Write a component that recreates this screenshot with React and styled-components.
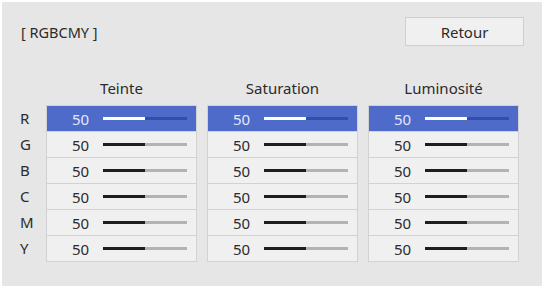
import React from 'react';
import styled, { createGlobalStyle } from 'styled-components';

const GlobalStyle = createGlobalStyle`
  html, body {
    margin: 0;
    padding: 0;
    background: #ffffff;
  }
  body {
    font-family: "Noto Sans", "Open Sans", "Liberation Sans", sans-serif;
    color: #2b2b2b;
  }
`;

const Panel = styled.div`
  margin: 2px;
  width: 540px;
  height: 284px;
  background: #e6e6e6;
  box-sizing: border-box;
  display: flex;
  flex-direction: column;
`;

const TopBar = styled.div`
  display: flex;
  justify-content: space-between;
  align-items: center;
  margin-top: 15px;
  padding: 0 18px 0 19px;
`;

const Title = styled.div`
  font-size: 14.5px;
`;

const BackButton = styled.button`
  width: 119px;
  height: 29px;
  background: #f0f0f0;
  border: 1px solid #cfcfcf;
  font-family: inherit;
  font-size: 15px;
  color: #2b2b2b;
  padding: 0;
`;

const Grid = styled.div`
  display: flex;
  gap: 10px;
  margin-top: 32px;
`;

const Column = styled.div`
  display: flex;
  flex-direction: column;
  width: ${(p) => p.$width}px;
`;

const Heading = styled.div`
  height: 20px;
  line-height: 20px;
  text-align: center;
  font-size: 15px;
  margin-bottom: 7px;
`;

const LabelList = styled.div`
  display: flex;
  flex-direction: column;
  padding-top: 1px;
`;

const Label = styled.div`
  height: 26px;
  line-height: 25px;
  padding-left: 18px;
  font-size: 15px;
`;

const Box = styled.div`
  border: 1px solid #d2d2d2;
  background: #d2d2d2;
  display: flex;
  flex-direction: column;
  gap: 1px;
`;

const Row = styled.div`
  height: 25px;
  display: flex;
  align-items: center;
  padding-left: 25px;
  background: ${(p) => (p.$active ? '#4f6bc9' : '#f0f0f0')};
`;

const Value = styled.span`
  width: 31px;
  font-size: 15px;
  color: ${(p) => (p.$active ? '#e2e8fa' : '#2b2b2b')};
`;

const Track = styled.div`
  width: 84px;
  height: 3px;
  background: ${(p) => (p.$active ? '#2f4ead' : '#b3b3b3')};
`;

const Fill = styled.div`
  height: 100%;
  background: ${(p) => (p.$active ? '#ffffff' : '#1e1e1e')};
`;

const channels = ['R', 'G', 'B', 'C', 'M', 'Y'];
const columns = ['Teinte', 'Saturation', 'Luminosité'];

function Slider({ value, active }) {
  return (
    <Track $active={active}>
      <Fill $active={active} style={{ width: `${value}%` }} />
    </Track>
  );
}

export default function App() {
  return (
    <>
      <GlobalStyle />
      <Panel>
        <TopBar>
          <Title>[ RGBCMY ]</Title>
          <BackButton>Retour</BackButton>
        </TopBar>
        <Grid>
          <Column $width={34}>
            <Heading />
            <LabelList>
              {channels.map((c) => (
                <Label key={c}>{c}</Label>
              ))}
            </LabelList>
          </Column>
          {columns.map((name) => (
            <Column key={name} $width={151}>
              <Heading>{name}</Heading>
              <Box>
                {channels.map((c, i) => (
                  <Row key={c} $active={i === 0}>
                    <Value $active={i === 0}>50</Value>
                    <Slider value={50} active={i === 0} />
                  </Row>
                ))}
              </Box>
            </Column>
          ))}
        </Grid>
      </Panel>
    </>
  );
}
